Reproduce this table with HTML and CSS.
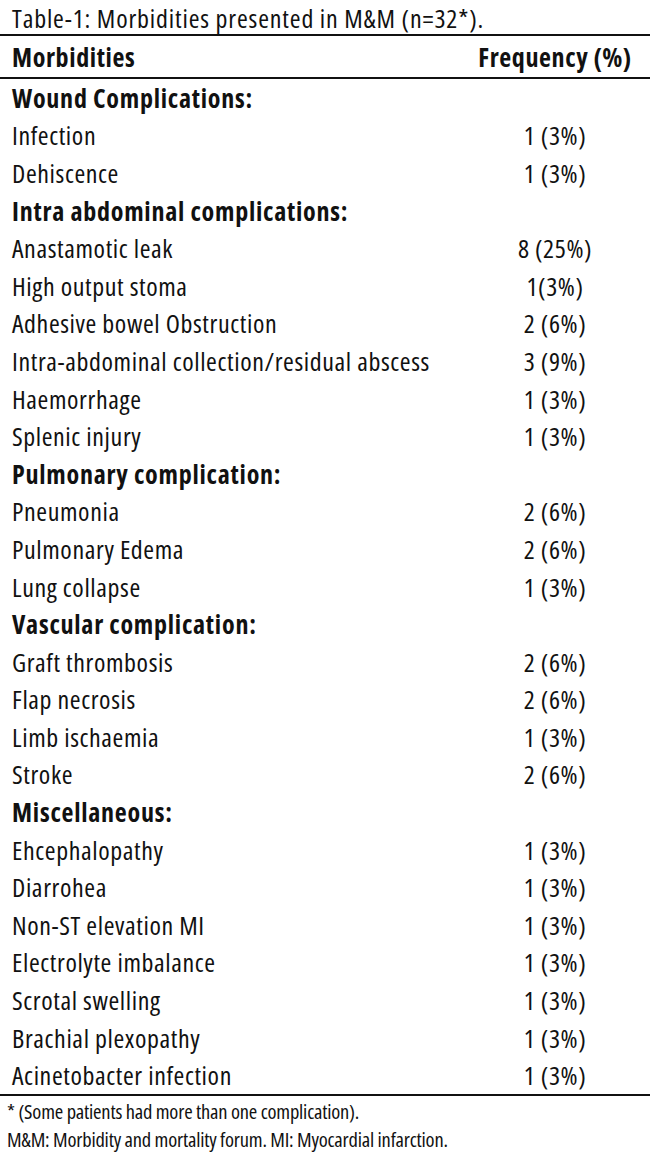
FILE: index.html
```html
<!DOCTYPE html>
<html lang="en">
<head>
<meta charset="utf-8">
<title>Table-1: Morbidities presented in M&amp;M</title>
<link rel="stylesheet" href="styles.css">
</head>
<body>
<div class="page">
  <p class="title">Table-1: Morbidities presented in M&amp;M (n=32*).</p>
  <table class="morb">
    <colgroup><col class="c-name"><col class="c-freq"></colgroup>
    <thead>
      <tr><th class="name">Morbidities</th><th class="freq">Frequency (%)</th></tr>
    </thead>
    <tbody>
      <tr class="section"><td class="name">Wound Complications:</td><td class="freq"></td></tr>
      <tr><td class="name">Infection</td><td class="freq">1 (3%)</td></tr>
      <tr><td class="name">Dehiscence</td><td class="freq">1 (3%)</td></tr>
      <tr class="section"><td class="name">Intra abdominal complications:</td><td class="freq"></td></tr>
      <tr><td class="name">Anastamotic leak</td><td class="freq">8 (25%)</td></tr>
      <tr><td class="name">High output stoma</td><td class="freq">1(3%)</td></tr>
      <tr><td class="name">Adhesive bowel Obstruction</td><td class="freq">2 (6%)</td></tr>
      <tr><td class="name">Intra-abdominal collection/residual abscess</td><td class="freq">3 (9%)</td></tr>
      <tr><td class="name">Haemorrhage</td><td class="freq">1 (3%)</td></tr>
      <tr><td class="name">Splenic injury</td><td class="freq">1 (3%)</td></tr>
      <tr class="section"><td class="name">Pulmonary complication:</td><td class="freq"></td></tr>
      <tr><td class="name">Pneumonia</td><td class="freq">2 (6%)</td></tr>
      <tr><td class="name">Pulmonary Edema</td><td class="freq">2 (6%)</td></tr>
      <tr><td class="name">Lung collapse</td><td class="freq">1 (3%)</td></tr>
      <tr class="section"><td class="name">Vascular complication:</td><td class="freq"></td></tr>
      <tr><td class="name">Graft thrombosis</td><td class="freq">2 (6%)</td></tr>
      <tr><td class="name">Flap necrosis</td><td class="freq">2 (6%)</td></tr>
      <tr><td class="name">Limb ischaemia</td><td class="freq">1 (3%)</td></tr>
      <tr><td class="name">Stroke</td><td class="freq">2 (6%)</td></tr>
      <tr class="section"><td class="name">Miscellaneous:</td><td class="freq"></td></tr>
      <tr><td class="name">Ehcephalopathy</td><td class="freq">1 (3%)</td></tr>
      <tr><td class="name">Diarrohea</td><td class="freq">1 (3%)</td></tr>
      <tr><td class="name">Non-ST elevation MI</td><td class="freq">1 (3%)</td></tr>
      <tr><td class="name">Electrolyte imbalance</td><td class="freq">1 (3%)</td></tr>
      <tr><td class="name">Scrotal swelling</td><td class="freq">1 (3%)</td></tr>
      <tr><td class="name">Brachial plexopathy</td><td class="freq">1 (3%)</td></tr>
      <tr><td class="name">Acinetobacter infection</td><td class="freq">1 (3%)</td></tr>
    </tbody>
  </table>
  <div class="notes">
    <p class="note">* (Some patients had more than one complication).</p>
    <p class="note">M&amp;M: Morbidity and mortality forum. MI: Myocardial infarction.</p>
  </div>
</div>
</body>
</html>
```

FILE: styles.css
```css
html, body {
  margin: 0;
  padding: 0;
  background: #ffffff;
}

.page {
  width: 650px;
  font-family: "Open Sans", "DejaVu Sans Condensed", sans-serif;
  font-stretch: 75%;
  color: #111111;
}

.title {
  margin: 0;
  height: 33px;
  padding: 1px 0 0 12px;
  font-size: 26px;
  line-height: 34px;
  letter-spacing: 0.85px;
  white-space: nowrap;
  overflow: visible;
}

.morb {
  width: 650px;
  table-layout: fixed;
  border-collapse: collapse;
  border-top: 2.5px solid #111111;
  border-bottom: 2.5px solid #111111;
}

.c-name { width: 470px; }
.c-freq { width: 180px; }

.morb th {
  height: 41px;
  padding: 0;
  font-size: 26px;
  font-weight: bold;
  letter-spacing: 0.6px;
  border-bottom: 2.5px solid #111111;
}

.morb td {
  height: 37.6px;
  padding: 0;
  font-size: 26px;
  letter-spacing: 0.6px;
}

.morb .name {
  text-align: left;
  padding-left: 12px;
  white-space: nowrap;
}

.morb .freq {
  padding-right: 10px;
  text-align: center;
  white-space: nowrap;
}

.morb .section .name {
  font-weight: bold;
  letter-spacing: 0.75px;
}

.notes {
  padding-top: 2px;
}

.note {
  margin: 0;
  padding-left: 7px;
  font-size: 20.5px;
  line-height: 27.5px;
  letter-spacing: -0.2px;
  white-space: nowrap;
}
```
